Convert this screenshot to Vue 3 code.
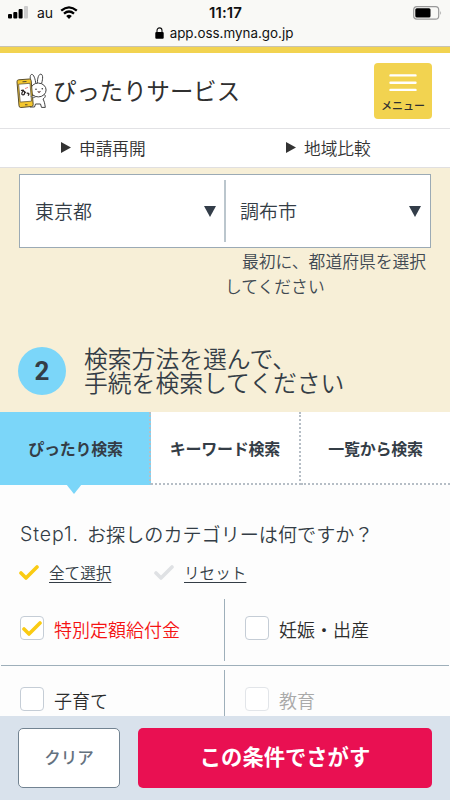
<script setup>
import { reactive } from 'vue'

const selects = ['東京都', '調布市']
const links = ['申請再開', '地域比較']
const tabs = ['ぴったり検索', 'キーワード検索', '一覧から検索']
const categories = reactive([
  { label: '特別定額給付金', checked: true },
  { label: '妊娠・出産' },
  { label: '子育て' },
  { label: '教育', disabled: true },
])
</script>

<template>
  <div class="screen">
    <header class="status">
      <div class="status-row">
        <div class="carrier">
          <svg class="signal" viewBox="0 0 20 13">
            <rect x="0" y="8" width="4" height="4.5" rx="1" />
            <rect x="5.3" y="6" width="4" height="6.5" rx="1" />
            <rect x="10.6" y="3" width="4" height="9.5" rx="1" />
            <rect x="16" y="0" width="4" height="12.5" rx="1" fill="#ccc" />
          </svg>
          <span class="au">au</span>
          <svg class="wifi" viewBox="0 0 18 13">
            <path d="M1.2 4.7 Q9-2 16.8 4.7" />
            <path d="M4 7.7 Q9 3.4 14 7.7" />
            <path class="dot" d="M6.2 10 Q9 7.7 11.8 10 L9 12.9Z" />
          </svg>
        </div>
        <b class="time">11:17</b>
        <svg class="battery" viewBox="0 0 30 14">
          <rect x=".7" y=".7" width="25" height="12.4" rx="3.2" fill="none" stroke="#999" stroke-width="1.2" />
          <rect x="2.3" y="2.3" width="15.2" height="9.2" rx="1.5" />
          <path d="M27.3 4.7 Q29 7 27.3 9.1Z" fill="#999" />
        </svg>
      </div>
      <div class="address">
        <svg viewBox="0 0 9 12">
          <rect x=".3" y="5" width="8.4" height="6.8" rx="1" />
          <path d="M2 5.5V3.4a2.5 2.5 0 0 1 5 0v2.1" fill="none" stroke="#111" stroke-width="1.1" />
        </svg>
        <span>app.oss.myna.go.jp</span>
      </div>
    </header>

    <div class="brandbar">
      <svg class="mascot" viewBox="0 0 32 36">
        <g fill="#fff" stroke="#444" stroke-width="1" stroke-linejoin="round">
          <path d="M15.8 12.5C14 7 13.4 1.8 15.7 1.4c2-.3 3.7 4.8 4.1 9.4" />
          <path d="M21.4 10.7C21.3 5 22.7.8 25 1.2c2.7.6 1.5 6.5.2 10.6" />
          <path d="M16 23c-1 4-.5 7-2 11h4.5l1-3h5l1 3.4h3.8c-.6-4-.8-5.5-2.3-8.4 2.7-1.7 3-3.8 1-4.5z" />
          <ellipse cx="22.3" cy="17" rx="7.8" ry="6.9" />
          <path d="M17 13Q22 8.7 27 13" stroke="none" />
        </g>
        <path d="M1 8.8Q.8 7 2.6 6.8L13.4 6Q15 5.9 15.1 7.5L17.2 31.5Q17.3 33.3 15.6 33.5L4.8 34.5Q3.2 34.6 3 32.8Z" fill="#f5c72d" stroke="#594d2d" stroke-width="1" />
        <path d="M2.6 11.2L14 10.3L15.5 28.2L4.2 29.1Z" fill="#fff" stroke="#665837" stroke-width=".8" />
        <path d="M6.5 8.8L10.5 8.5M9 31.8h2.5" fill="none" stroke="#594d2d" stroke-width="1.1" />
        <path d="M5 17.5q3-1 2.5.2c-2.5 2-2 4.5-.3 4.2 1.8-.3 1.5-2.5 1-3.8l1.5 1.8M10.7 20.4c2-.9 3.2.8 1.2 2" fill="none" stroke="#292323" stroke-width="1.2" />
        <path d="M9 15.6l3-1.2" stroke="#e88585" stroke-width="1" />
        <circle cx="20" cy="16.3" r=".8" fill="#333" /><circle cx="26.3" cy="15.8" r=".8" fill="#333" />
        <path d="M21.6 18.6q1.4 2.8 3-.2z" fill="#e67875" stroke="#555" stroke-width=".6" />
        <path d="M14.7 23.4q2.5 2.5 5.2.2" fill="#fff" stroke="#444" stroke-width=".9" />
      </svg>
      <h1>ぴったりサービス</h1>
      <button class="menu">
        <svg viewBox="0 0 28 18"><path d="M1.5 1.4h25M1.5 8.7h25M1.5 15.9h25" /></svg>
        <span>メニュー</span>
      </button>
    </div>

    <nav class="links">
      <a v-for="link in links" :key="link">
        <svg viewBox="0 0 10 11"><path d="M0 0L10 5.5L0 11Z" /></svg>{{ link }}
      </a>
    </nav>

    <section class="region">
      <div class="selects">
        <div v-for="s in selects" :key="s" class="select">
          <span>{{ s }}</span>
          <svg viewBox="0 0 12 11"><path d="M0 0H12L6 11Z" /></svg>
        </div>
      </div>
      <p class="hint">最初に、都道府県を選択<br>してください</p>
      <div class="step">
        <span class="number">2</span>
        <h2>検索方法を選んで、<br>手続を検索してください</h2>
      </div>
    </section>

    <div class="tabs">
      <div v-for="(tab, i) in tabs" :key="tab" class="tab" :class="{ active: i === 0 }"><span>{{ tab }}</span></div>
    </div>

    <main>
      <h3><span class="latin">Step1.</span>お探しのカテゴリーは何ですか？</h3>
      <div class="actions">
        <a><svg class="tick" viewBox="0 0 20 15"><path d="M2 8L7 13L18 2" /></svg><u>全て選択</u></a>
        <a><svg class="tick muted" viewBox="0 0 20 15"><path d="M2 8L7 13L18 2" /></svg><u>リセット</u></a>
      </div>
      <div class="grid">
        <label v-for="c in categories" :key="c.label" :class="{ checked: c.checked, disabled: c.disabled }">
          <span class="box"><svg v-if="c.checked" class="tick" viewBox="0 0 20 15"><path d="M2 8L7 13L18 2" /></svg></span>
          <span class="name">{{ c.label }}</span>
        </label>
      </div>
    </main>

    <footer>
      <button class="clear">クリア</button>
      <button class="search">この条件でさがす</button>
    </footer>
  </div>
</template>

<style>
body { margin: 0; overflow: hidden; }
</style>

<style scoped>
* { box-sizing: border-box; }
.screen { width: 450px; height: 800px; overflow: hidden; display: flex; flex-direction: column; background: #fdfdfd; color: #343d46; font-family: "Noto Sans CJK JP", sans-serif; font-weight: 350; }
.screen > * { flex-shrink: 0; }
svg { display: block; flex-shrink: 0; }
h1, h2, h3, p { margin: 0; font-weight: inherit; }
button { font-family: inherit; padding: 0; border: 0; }
.status { height: 47px; background: #f9f9f6; border-bottom: 1px solid #c8c3b0; font-family: Inter, sans-serif; color: #111; font-weight: 400; }
.status-row { height: 25px; display: grid; grid-template-columns: 1fr auto 1fr; align-items: center; padding: 0 7px 0 8px; }
.carrier { display: flex; align-items: center; }
.signal { width: 20px; height: 13px; }
.au { font-size: 14px; margin: 0 7px 0 9px; line-height: 18px; }
.wifi { width: 18px; height: 13px; }
.wifi path { fill: none; stroke: #000; stroke-width: 2.3; }
.wifi .dot { fill: #000; stroke: none; }
.time { font-size: 15px; font-weight: 600; letter-spacing: .1px; }
.battery { width: 30px; height: 14px; justify-self: end; }
.address { display: flex; justify-content: center; align-items: center; height: 16px; font-size: 13.4px; gap: 6px; padding-right: 2px; line-height: 16px; }
.address svg { width: 9px; height: 12px; }
.brandbar { height: 82px; border-top: 6px solid #f2d350; border-bottom: 1px solid #e2e2e5; display: flex; align-items: center; padding: 0 18px 0 16px; background: #fff; }
.mascot { width: 32px; height: 36px; }
h1 { font-size: 23.4px; font-weight: 400; line-height: 34px; margin: 0 0 1px 5px; color: #303030; }
.menu { width: 58px; height: 56px; margin-left: auto; background: #f2d350; border-radius: 4px; display: flex; flex-direction: column; align-items: center; padding-top: 11px; }
.menu svg { width: 28px; height: 18px; }
.menu path { stroke: #fff; stroke-width: 2.4; stroke-linecap: round; }
.menu span { font-size: 11px; line-height: 14px; font-weight: 500; margin-top: 6px; color: #303030; }
.links { height: 39px; background: #fff; border-bottom: 1px solid #e0dfe0; display: grid; grid-template-columns: 1fr 1fr; }
.links a { display: flex; align-items: center; padding-left: 61px; gap: 8px; font-size: 16.7px; color: #333; line-height: 24px; }
.links svg { width: 10px; height: 11px; fill: #333; margin-bottom: 1px; }
.region { height: 244px; background: #f7efd7; padding: 6px 19px 0; }
.selects { height: 74px; background: #fff; border: 1px solid #9baab5; display: grid; grid-template-columns: 206px 1fr; padding: 5px 0; }
.select { display: flex; align-items: center; justify-content: space-between; padding: 0 9px 0 14px; font-size: 19px; line-height: 28px; }
.select:first-child { border-right: 2px solid #bbc6cd; padding-left: 15px; padding-right: 8px; }
.select svg { width: 12px; height: 11px; fill: #333d49; }
.hint { margin: 1px 0 0 206px; font-size: 16.8px; line-height: 25px; text-indent: 17px; white-space: nowrap; color: #404952; }
.step { display: flex; align-items: flex-start; gap: 18px; margin: 48px 0 0 -1px; }
.number { width: 48px; height: 48px; border-radius: 50%; background: #7bd6f9; display: grid; place-items: center; font: 700 26px Roboto, sans-serif; }
h2 { font-size: 23.8px; line-height: 24px; white-space: nowrap; margin-top: -1px; }
.tabs { height: 73px; display: grid; grid-template-columns: 151px 150px 1fr; background: #fff; }
.tab { position: relative; display: grid; place-items: center; font-size: 16px; line-height: 24px; font-weight: 700; letter-spacing: -.25px; border-right: 2px dotted #b6bec6; border-bottom: 2px dotted #b6bec6; }
.tab:last-child { border-right: 0; }
.tab.active { background: #7bd6f9; border-bottom-color: transparent; }
.tab.active span { padding-left: 2px; }
.tab.active::after { content: ""; position: absolute; left: 66px; top: 72px; border: 8px solid transparent; border-top: 10px solid #7bd6f9; border-bottom: 0; }
main { height: 231px; overflow: hidden; }
h3 { margin: 35px 0 0 20px; font-size: 19.1px; line-height: 28px; display: flex; white-space: nowrap; }
.latin { width: 67px; font-family: Inter, sans-serif; font-weight: 300; font-size: 19.5px; letter-spacing: .9px; }
.actions { display: flex; margin: 12px 0 0 19px; height: 24px; }
.actions a { width: 135px; display: flex; align-items: center; gap: 10px; font-size: 15.6px; line-height: 24px; }
.actions u { text-decoration-thickness: 1px; text-underline-offset: 3px; }
.tick { width: 20px; height: 15px; }
.tick path { fill: none; stroke: #facb13; stroke-width: 3.6; stroke-linecap: round; stroke-linejoin: round; }
.tick.muted path { stroke: #dfe1e4; }
.grid { margin: 11px 1px 0; display: grid; grid-template-columns: 223px 1fr; grid-template-rows: 71px 71px; }
.grid label { position: relative; display: flex; align-items: center; gap: 10px; padding: 0 0 4px 19px; font-size: 18px; line-height: 26px; color: #2c2c2c; border-bottom: 1px solid #9eafba; white-space: nowrap; }
.grid label:nth-child(even) { padding-left: 21px; }
.grid label:nth-child(odd)::after { content: ""; position: absolute; right: -1px; top: 4px; height: 62px; width: 1px; background: #9eafba; }
.name { padding-top: 2px; }
.box { width: 24px; height: 24px; border: 1px solid #c5cdd6; border-radius: 4px; display: grid; place-items: center; background: #fff; }
.grid .checked { color: #f51414; }
.grid .disabled { color: #aaa; }
.disabled .box { border-color: #e2e5e9; }
footer { height: 84px; background: #d9e2ec; display: flex; gap: 18px; padding: 12px 18px; }
.clear { width: 102px; height: 60px; border: 1px solid #728392; border-radius: 5px; background: #fff; color: #64727f; font-size: 16.5px; font-weight: 500; padding-bottom: 2px; }
.search { flex: 1; height: 60px; border-radius: 5px; background: #e91052; color: #fff; font-size: 21.3px; font-weight: 700; padding-bottom: 5px; }
</style>
